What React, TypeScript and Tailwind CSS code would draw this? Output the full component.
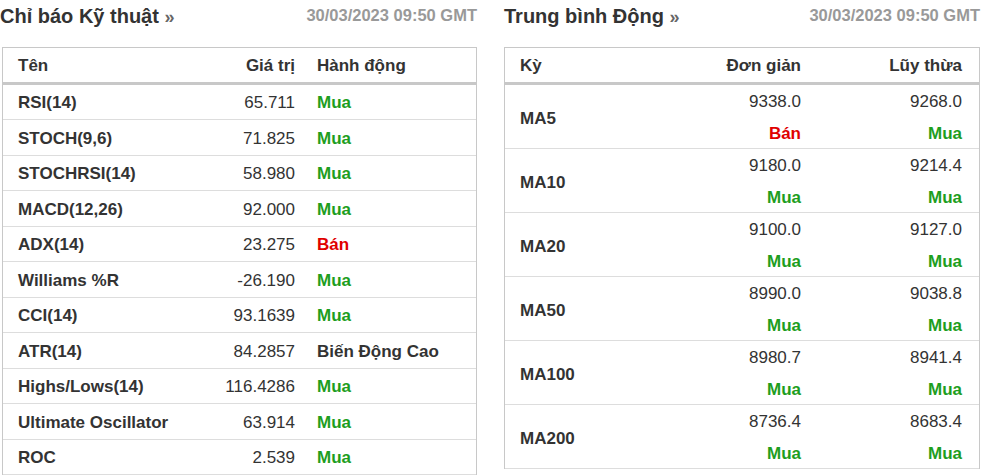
import React from "react";

const left: [string, string, string][] = [
  ["RSI(14)", "65.711", "Mua"],
  ["STOCH(9,6)", "71.825", "Mua"],
  ["STOCHRSI(14)", "58.980", "Mua"],
  ["MACD(12,26)", "92.000", "Mua"],
  ["ADX(14)", "23.275", "Bán"],
  ["Williams %R", "-26.190", "Mua"],
  ["CCI(14)", "93.1639", "Mua"],
  ["ATR(14)", "84.2857", "Biến Động Cao"],
  ["Highs/Lows(14)", "116.4286", "Mua"],
  ["Ultimate Oscillator", "63.914", "Mua"],
  ["ROC", "2.539", "Mua"],
];
const right: [string, string, string, string, string][] = [
  ["MA5", "9338.0", "Bán", "9268.0", "Mua"],
  ["MA10", "9180.0", "Mua", "9214.4", "Mua"],
  ["MA20", "9100.0", "Mua", "9127.0", "Mua"],
  ["MA50", "8990.0", "Mua", "9038.8", "Mua"],
  ["MA100", "8980.7", "Mua", "8941.4", "Mua"],
  ["MA200", "8736.4", "Mua", "8683.4", "Mua"],
];
const act = (a: string) =>
  a === "Bán" ? "text-[#e00000]" : a === "Mua" ? "text-[#1e9e1e]" : "text-[#333]";

export default function App() {
  return (
    <div className="w-[982px] h-[475px] overflow-hidden bg-white flex gap-[27px] pl-[2px] text-[#333] text-[17px]" style={{ fontFamily: '"Liberation Sans", Arial, sans-serif' }}>
      <div className="w-[475px] flex flex-col">
        <div className="h-[47px] flex items-start justify-between pt-[1px]">
          <div className="text-[20px] font-bold -ml-[2px]">Chỉ báo Kỹ thuật <span className="text-[#666] text-[18px]">»</span></div>
          <div className="text-[16.5px] font-bold text-[#999] pt-[2px]">30/03/2023 09:50 GMT</div>
        </div>
        <div className="border border-[#c8c8c8] border-b-0">
          <div className="h-[37px] flex items-center font-bold border-b-[3px] border-[#c8c8c8] pt-[2px]">
            <div className="pl-[15px] flex-1">Tên</div>
            <div className="w-[120px] text-right">Giá trị</div>
            <div className="w-[181px] pl-[22px]">Hành động</div>
          </div>
          {left.map(([n, v, a]) => (
            <div key={n} className="h-[35.5px] flex items-center border-b border-[#ddd] pt-[2px]">
              <div className="pl-[15px] flex-1 font-bold">{n}</div>
              <div className="w-[120px] text-right">{v}</div>
              <div className={"w-[181px] pl-[22px] font-bold " + act(a)}>{a}</div>
            </div>
          ))}
        </div>
      </div>
      <div className="w-[476px] flex flex-col">
        <div className="h-[47px] flex items-start justify-between pt-[1px]">
          <div className="text-[20px] font-bold">Trung bình Động <span className="text-[#666] text-[18px]">»</span></div>
          <div className="text-[16.5px] font-bold text-[#999] pt-[2px]">30/03/2023 09:50 GMT</div>
        </div>
        <div className="border border-[#c8c8c8] border-b-0">
          <div className="h-[37px] flex items-center font-bold border-b-[3px] border-[#c8c8c8] pt-[2px]">
            <div className="pl-[15px] flex-1">Kỳ</div>
            <div className="w-[200px] text-right">Đơn giản</div>
            <div className="w-[178px] text-right pr-[17px]">Lũy thừa</div>
          </div>
          {right.map(([n, s, sa, e, ea]) => (
            <div key={n} className="h-[64px] flex items-center border-b border-[#ddd] pt-[2px]">
              <div className="pl-[15px] flex-1 font-bold pt-[2px]">{n}</div>
              <div className="w-[200px] text-right flex flex-col gap-[14px] leading-[18px]">
                <div>{s}</div>
                <div className={"font-bold " + act(sa)}>{sa}</div>
              </div>
              <div className="w-[178px] text-right pr-[17px] flex flex-col gap-[14px] leading-[18px]">
                <div>{e}</div>
                <div className={"font-bold " + act(ea)}>{ea}</div>
              </div>
            </div>
          ))}
        </div>
      </div>
    </div>
  );
}
